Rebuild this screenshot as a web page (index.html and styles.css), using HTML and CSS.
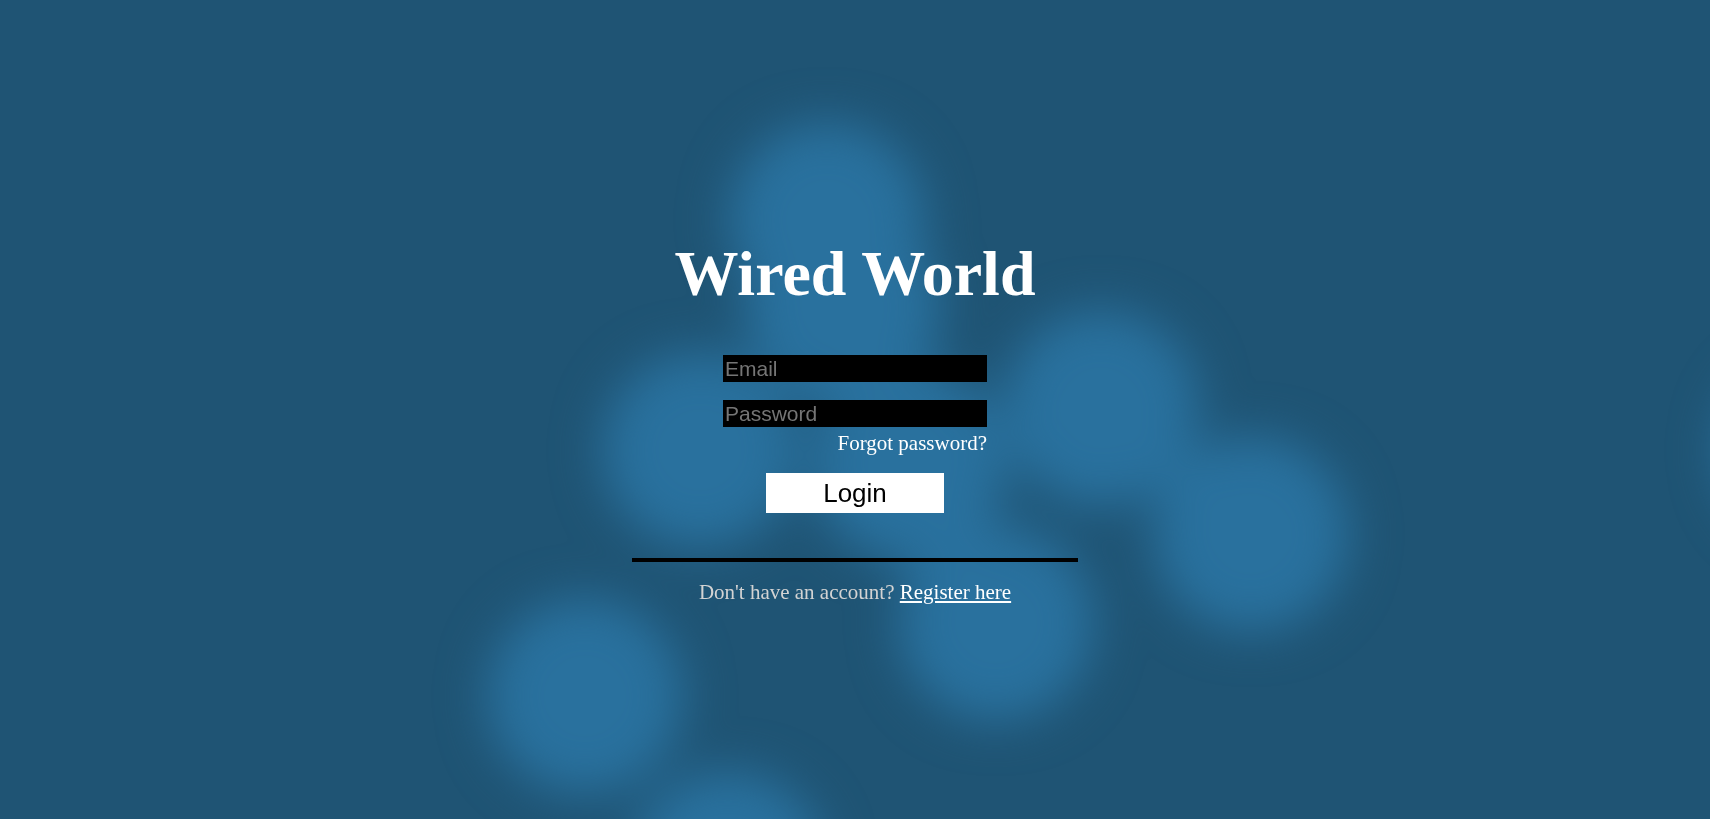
FILE: index.html
```html
<!DOCTYPE html>
<html lang="en">
<head>
<meta charset="utf-8">
<meta name="viewport" content="width=device-width, initial-scale=1">
<title>Wired World</title>
<link rel="stylesheet" href="styles.css">
</head>
<body>
<svg class="bubbles" viewBox="0 0 1710 819" preserveAspectRatio="xMidYMid slice" aria-hidden="true">
  <defs>
    <filter id="soften" filterUnits="userSpaceOnUse" x="-200" y="-200" width="2300" height="1300" color-interpolation-filters="sRGB">
      <feGaussianBlur stdDeviation="24"/>
    </filter>
  </defs>
  <g filter="url(#soften)">
    <circle cx="827" cy="220" r="98"/>
    <circle cx="843" cy="307" r="98"/>
    <circle cx="700" cy="450" r="98"/>
    <circle cx="909" cy="464" r="98"/>
    <circle cx="1101" cy="408" r="98"/>
    <circle cx="1251" cy="534" r="98"/>
    <circle cx="996" cy="623" r="98"/>
    <circle cx="585" cy="696" r="98"/>
    <circle cx="728" cy="869" r="98"/>
    <circle cx="1818" cy="450" r="98"/>
  </g>
</svg>
<main class="page">
  <h1 class="title">Wired World</h1>
  <form class="login">
    <div class="fields">
      <input class="field" type="email" placeholder="Email" aria-label="Email">
      <input class="field" type="password" placeholder="Password" aria-label="Password">
      <a class="forgot" href="#">Forgot password?</a>
    </div>
    <button class="submit" type="submit">Login</button>
  </form>
  <hr class="rule">
  <p class="register">Don't have an account? <a class="register-link" href="#">Register here</a></p>
</main>
</body>
</html>
```
FILE: styles.css
```css
* {
  box-sizing: border-box;
}

body {
  margin: 0;
  min-height: 100vh;
  display: flex;
  justify-content: center;
  align-items: center;
  background: #1f5474;
  color: #fff;
  font-family: "Liberation Serif", "Times New Roman", serif;
  font-size: 21px;
  line-height: 24px;
}

.bubbles {
  position: fixed;
  inset: 0;
  z-index: -1;
  width: 100%;
  height: 100%;
  fill: #29719e;
}

.page {
  display: flex;
  flex-direction: column;
  align-items: center;
  width: 446px;
  max-width: 100%;
  padding-top: 22px;
}

.title {
  margin: 0 0 44px;
  font-size: 64px;
  line-height: 74px;
}

.login {
  display: flex;
  flex-direction: column;
  align-items: center;
  gap: 18px;
}

.fields {
  display: flex;
  flex-direction: column;
  width: 264px;
}

.field {
  width: 100%;
  height: 27px;
  margin: 0 0 18px;
  padding: 0 2px;
  border: 0;
  border-radius: 0;
  background: #000;
  color: #fff;
  font-family: "Liberation Sans", Arial, sans-serif;
  font-size: 21px;
}

.field + .field {
  margin-bottom: 4px;
}

.field::placeholder {
  color: #757575;
}

.forgot {
  align-self: flex-end;
  color: #fff;
  text-decoration: none;
}

.submit {
  width: 178px;
  height: 40px;
  padding: 0;
  border: 0;
  background: #fff;
  color: #000;
  font-family: "Liberation Sans", Arial, sans-serif;
  font-size: 26px;
}

.rule {
  width: 100%;
  height: 4px;
  margin: 45px 0 18px;
  border: 0;
  background: #000;
}

.register {
  margin: 0;
  color: #d3d3d3;
}

.register-link {
  color: #fff;
}
```
